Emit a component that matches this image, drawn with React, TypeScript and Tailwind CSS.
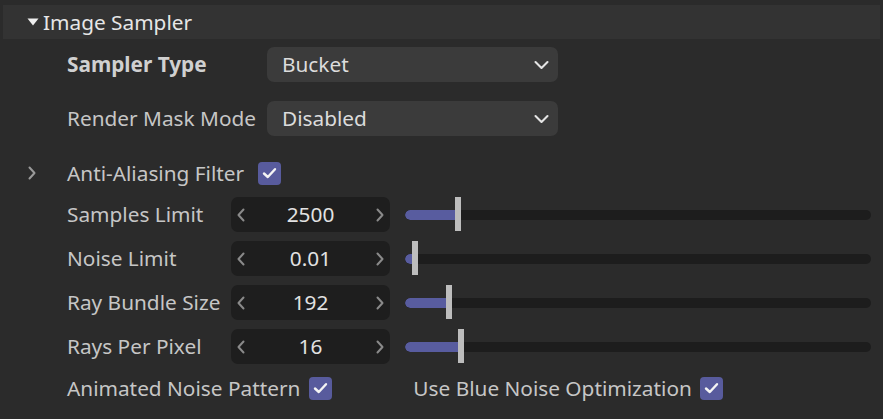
import React from "react";

const Check = () => (
  <div className="w-[23px] h-[23px] rounded-[4px] bg-[#585b9d] flex items-center justify-center">
    <svg width="15" height="12" viewBox="0 0 15 12" fill="none">
      <path d="M2 6.5 L5.8 10 L13 2.2" stroke="#f4f4f4" strokeWidth="2.4" strokeLinecap="round" strokeLinejoin="round" />
    </svg>
  </div>
);

const Dropdown = ({ value }: { value: string }) => (
  <div className="w-[291px] h-[35px] rounded-[7px] bg-[#3b3b3b] flex items-center justify-between pl-[15px] pr-[9px] text-[#dcdcdc]">
    <span>{value}</span>
    <svg width="15" height="10" viewBox="0 0 15 10" fill="none">
      <path d="M1.5 2 L7.5 8 L13.5 2" stroke="#e4e4e4" strokeWidth="2.1" strokeLinecap="round" strokeLinejoin="round" />
    </svg>
  </div>
);

const NumRow = ({ label, value, pos }: { label: string; value: string; pos: number }) => (
  <div className="flex items-center h-[35px]">
    <div className="w-[164px] text-[#c6c6c6]">{label}</div>
    <div className="w-[159px] h-[35px] rounded-[7px] bg-[#1e1e1e] flex items-center justify-between px-[5px]">
      <svg width="10" height="14" viewBox="0 0 10 14" fill="none">
        <path d="M7.5 1.5 L2.5 7 L7.5 12.5" stroke="#8a8a8a" strokeWidth="2" strokeLinecap="round" strokeLinejoin="round" />
      </svg>
      <span className="text-[#e2e2e2]">{value}</span>
      <svg width="10" height="14" viewBox="0 0 10 14" fill="none">
        <path d="M2.5 1.5 L7.5 7 L2.5 12.5" stroke="#8a8a8a" strokeWidth="2" strokeLinecap="round" strokeLinejoin="round" />
      </svg>
    </div>
    <div className="ml-[15px] w-[466px] h-[35px] relative flex items-center">
      <div className="w-full h-[10px] rounded-full bg-[#1d1d1d] overflow-hidden">
        <div className="h-full bg-[#585c9f] rounded-l-full" style={{ width: `${pos}px` }} />
      </div>
      <div className="absolute top-0 w-[6px] h-[34px] bg-[#bdbdbd]" style={{ left: `${pos - 3}px` }} />
    </div>
  </div>
);

export default function App() {
  return (
    <div className="w-[883px] h-[419px] bg-[#2b2b2b] pt-[5px] px-[3px] font-['Noto_Sans',sans-serif] text-[20.8px] leading-none">
      <div className="h-[34px] bg-[#333333] flex items-center pl-[24px]">
        <svg width="12" height="8" viewBox="0 0 12 8">
          <path d="M0.5 0.5 L11.5 0.5 L6 7.5 Z" fill="#eeeeee" />
        </svg>
        <span className="ml-[4px] text-[#e6e6e6]">Image Sampler</span>
      </div>
      <div className="pl-[64px]">
        <div className="mt-[8px] flex items-center h-[35px]">
          <div className="w-[200px] font-bold text-[#d0d0d0]">Sampler Type</div>
          <Dropdown value="Bucket" />
        </div>
        <div className="mt-[19px] flex items-center h-[35px]">
          <div className="w-[200px] text-[#c6c6c6]">Render Mask Mode</div>
          <Dropdown value="Disabled" />
        </div>
      </div>
      <div className="mt-[25px] flex items-center h-[24px] pl-[24px]">
        <svg width="10" height="14" viewBox="0 0 10 14" fill="none">
          <path d="M2.5 1.5 L7.5 7 L2.5 12.5" stroke="#9a9a9a" strokeWidth="2" strokeLinecap="round" strokeLinejoin="round" />
        </svg>
        <span className="ml-[30px] text-[#c6c6c6]">Anti-Aliasing Filter</span>
        <div className="ml-[14px]"><Check /></div>
      </div>
      <div className="pl-[64px] mt-[12px] flex flex-col gap-[9px]">
        <NumRow label="Samples Limit" value="2500" pos={53} />
        <NumRow label="Noise Limit" value="0.01" pos={10} />
        <NumRow label="Ray Bundle Size" value="192" pos={44} />
        <NumRow label="Rays Per Pixel" value="16" pos={56} />
      </div>
      <div className="pl-[64px] mt-[12px] flex items-center h-[24px]">
        <span className="text-[#c6c6c6]">Animated Noise Pattern</span>
        <div className="ml-[9px]"><Check /></div>
        <span className="ml-[81px] text-[#c6c6c6]">Use Blue Noise Optimization</span>
        <div className="ml-[8px]"><Check /></div>
      </div>
    </div>
  );
}
